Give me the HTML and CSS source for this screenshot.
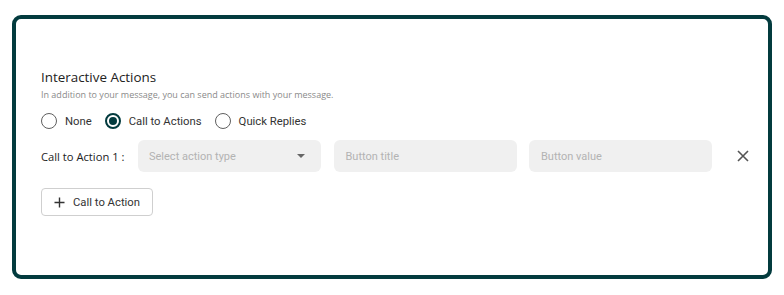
FILE: index.html
```html
<!DOCTYPE html>
<html>
<head>
<meta charset="utf-8">
<link rel="stylesheet" href="styles.css">
</head>
<body>
<div class="card">
  <h2 class="title">Interactive Actions</h2>
  <p class="subtitle">In addition to your message, you can send actions with your message.</p>
  <div class="radios">
    <label class="radio"><span class="dot"></span>None</label>
    <label class="radio checked"><span class="dot"></span>Call to Actions</label>
    <label class="radio"><span class="dot"></span>Quick Replies</label>
  </div>
  <div class="cta-row">
    <span class="cta-label">Call to Action 1 :</span>
    <div class="field select"><span>Select action type</span><span class="caret"></span></div>
    <div class="field"><span>Button title</span></div>
    <div class="field"><span>Button value</span></div>
    <span class="close">
      <svg width="12" height="12" viewBox="0 0 12 12"><path d="M1 1 L11 11 M11 1 L1 11" stroke="#555" stroke-width="1.6" fill="none"/></svg>
    </span>
  </div>
  <button class="add-btn">
    <svg width="11" height="11" viewBox="0 0 11 11"><path d="M5.5 0.5 V10.5 M0.5 5.5 H10.5" stroke="#333" stroke-width="1.4" fill="none"/></svg>
    <span>Call to Action</span>
  </button>
</div>
</body>
</html>
```

FILE: styles.css
```css
* { box-sizing: border-box; }
html, body { margin: 0; padding: 0; background: #fff; }
body { font-family: Roboto, "Liberation Sans", sans-serif; }

.card {
  margin: 15px 0 0 12px;
  width: 760px;
  height: 264px;
  border: 4px solid #033b3e;
  border-radius: 9px;
  padding: 49px 25px 0 25px;
}

.title {
  margin: 0;
  font-family: "Open Sans", sans-serif;
  font-weight: 400;
  font-size: 13.4px;
  line-height: 18px;
  color: #222;
}

.subtitle {
  margin: 3px 0 0;
  font-family: "Open Sans", sans-serif;
  font-size: 9px;
  line-height: 12px;
  color: #8a8a8a;
}

.radios {
  display: flex;
  align-items: center;
  margin-top: 9px;
  height: 22px;
}

.radio {
  display: flex;
  align-items: center;
  gap: 8px;
  font-size: 11.3px;
  color: #333;
  margin-right: 13px;
}

.dot {
  width: 16px;
  height: 16px;
  border: 1.5px solid #5f5f5f;
  border-radius: 50%;
  display: flex;
  align-items: center;
  justify-content: center;
}

.radio.checked .dot { border: 2px solid #033b3e; }
.radio.checked .dot::after {
  content: "";
  width: 8px;
  height: 8px;
  border-radius: 50%;
  background: #033b3e;
}

.cta-row {
  display: flex;
  align-items: center;
  margin-top: 8px;
  height: 32px;
}

.cta-label {
  flex: 0 0 97px;
  font-family: "Open Sans", sans-serif;
  font-size: 11.2px;
  color: #222;
}

.field {
  flex: 0 0 183px;
  height: 32px;
  background: #f0f0f0;
  border-radius: 6px;
  display: flex;
  align-items: center;
  justify-content: space-between;
  padding: 0 12px;
  font-size: 11px;
  color: #b3b3b3;
  margin-right: 12.5px;
}

.select { padding: 0 16px 0 11px; }

.caret {
  width: 0;
  height: 0;
  border-left: 4.5px solid transparent;
  border-right: 4.5px solid transparent;
  border-top: 4.5px solid #666;
}

.close {
  display: flex;
  flex: 0 0 auto;
  margin-left: 12px;
}

.add-btn {
  margin-top: 16px;
  height: 28px;
  padding: 0 12px 0 12px;
  border: 1px solid #cfcfcf;
  border-radius: 4px;
  background: #fff;
  display: flex;
  align-items: center;
  gap: 8px;
  font-family: Roboto, sans-serif;
  font-size: 11.3px;
  color: #333;
}
```
